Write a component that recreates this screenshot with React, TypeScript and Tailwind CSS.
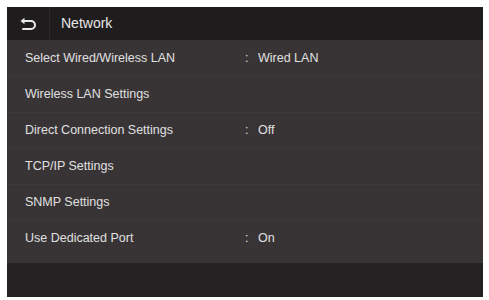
import { Fragment } from 'react';

interface Row {
  label: string;
  value?: string;
}

const rows: Row[] = [
  { label: 'Select Wired/Wireless LAN', value: 'Wired LAN' },
  { label: 'Wireless LAN Settings' },
  { label: 'Direct Connection Settings', value: 'Off' },
  { label: 'TCP/IP Settings' },
  { label: 'SNMP Settings' },
  { label: 'Use Dedicated Port', value: 'On' },
];

function BackIcon() {
  return (
    <svg width="18" height="14" viewBox="0 0 18 14" fill="none">
      <path d="M4 4h8a4 4 0 0 1 0 8H4" stroke="#e8e8e8" strokeWidth="2" strokeLinecap="round" />
      <path d="M1.5 4 5.5 0.8v6.4z" fill="#e8e8e8" />
    </svg>
  );
}

export default function App() {
  return (
    <div className="w-[489px] h-[300px] bg-white p-[7px] pr-[6px] pb-[3px]" style={{ fontFamily: '"Liberation Sans", Arial, sans-serif' }}>
      <div className="w-full h-full flex flex-col bg-[#383435]">
        {/* Header */}
        <div className="h-[33px] flex items-stretch bg-[#1f1c1d]">
          <div className="w-[43px] flex items-center justify-center border-r border-[#2c2829]">
            <BackIcon />
          </div>
          <div className="flex items-center pl-[11px] text-[14px] text-[#e6e6e6]">Network</div>
        </div>

        {/* List */}
        <div className="flex-1 flex flex-col pb-[7px]">
          {rows.map((row, i) => (
            <div
              key={row.label}
              className={`h-[36px] flex items-center pl-[18px] text-[12.5px] text-[#e0e0e0] ${i > 0 ? 'border-t border-[#3d393a]' : ''}`}
            >
              <span className="w-[220px]">{row.label}</span>
              {row.value && (
                <Fragment>
                  <span className="w-[13px]">:</span>
                  <span>{row.value}</span>
                </Fragment>
              )}
            </div>
          ))}
        </div>

        {/* Footer */}
        <div className="h-[34px] bg-[#242122]" />
      </div>
    </div>
  );
}
